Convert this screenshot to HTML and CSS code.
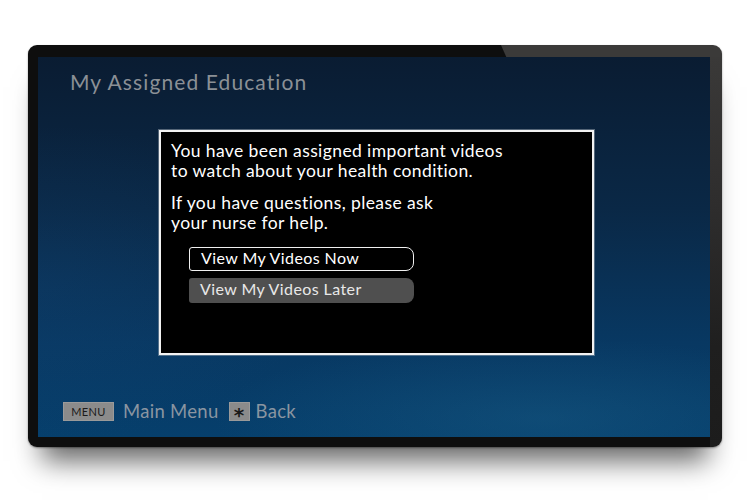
FILE: index.html
```html
<!DOCTYPE html>
<html lang="en">
<head>
<meta charset="utf-8">
<title>My Assigned Education</title>
<link rel="stylesheet" href="styles.css">
</head>
<body>
<div class="tv">
  <div class="screen">
    <h1 class="title">My Assigned Education</h1>
    <div class="dialog">
      <p class="msg">You have been assigned important videos<br>to watch about your health condition.</p>
      <p class="msg">If you have questions, please ask<br>your nurse for help.</p>
      <div class="options">
        <div class="option option-focus">View My Videos Now</div>
        <div class="option option-alt">View My Videos Later</div>
      </div>
    </div>
    <div class="footer">
      <span class="key key-menu">MENU</span>
      <span class="hint hint-menu">Main Menu</span>
      <span class="key key-star">*</span>
      <span class="hint">Back</span>
    </div>
  </div>
</div>
</body>
</html>
```
FILE: styles.css
```css
html, body {
  margin: 0;
  padding: 0;
  background: #ffffff;
}
body {
  width: 750px;
  height: 500px;
  overflow: hidden;
  font-family: Lato, "Noto Sans", "DejaVu Sans", sans-serif;
}
.tv {
  margin: 45px 0 0 28px;
  width: 694px;
  height: 402px;
  box-sizing: border-box;
  padding: 12px 12px 10px 10px;
  border-radius: 9px;
  background:
    linear-gradient(66deg, transparent 8px, #3b3a39 9px) no-repeat right top / 225px 12px,
    linear-gradient(#3b3a39, #2e2d2d 40%, #1f1f1f 75%, #1c1c1c) no-repeat right top / 12px 100%,
    #0e0e0e;
  box-shadow: 0 28px 26px -14px rgba(0, 0, 0, 0.6), 0 1px 2px rgba(0, 0, 0, 0.4);
}
.screen {
  width: 672px;
  height: 380px;
  display: flex;
  flex-direction: column;
  background:
    radial-gradient(ellipse 70% 30% at 75% 95%, rgba(30, 100, 140, 0.35), transparent 70%),
    radial-gradient(ellipse 60% 60% at 0% 60%, rgba(20, 70, 120, 0.25), transparent 70%),
    linear-gradient(to bottom, #0a1c32 0%, #0a2846 40%, #083862 75%, #063f6c 100%);
}
.title {
  margin: 12px 0 0 32px;
  font-size: 21px;
  line-height: 26px;
  font-weight: 400;
  letter-spacing: 1.1px;
  color: #8b9096;
}
.dialog {
  margin: 35px 0 0 121px;
  width: 435px;
  height: 225px;
  box-sizing: border-box;
  border: 2px solid #f2f2f2;
  box-shadow: 0 0 0 1px rgba(160, 170, 180, 0.5);
  background: #000000;
  padding: 8.5px 10px 0 10px;
  color: #ffffff;
}
.msg {
  margin: 0 0 12px 0;
  font-size: 17.5px;
  line-height: 20px;
  letter-spacing: 0.4px;
}
.options {
  margin: 14px 0 0 18px;
  display: flex;
  flex-direction: column;
  gap: 7px;
}
.option {
  width: 225px;
  height: 24px;
  box-sizing: border-box;
  padding-left: 11px;
  font-size: 16px;
  letter-spacing: 0.4px;
  border-radius: 3px 8px 8px 3px;
}
.option-focus {
  border: 1.5px solid #f0f0f0;
  color: #ffffff;
  line-height: 20px;
}
.option-alt {
  height: 25px;
  background: #4f4f4f;
  color: #e8e8e8;
  line-height: 22px;
}
.footer {
  margin: auto 0 15px 25px;
  display: flex;
  align-items: center;
}
.key {
  height: 19px;
  box-sizing: border-box;
  background: #8b8b8b;
  border: 1px solid #9a9a9a;
  color: #1a1a1a;
  display: flex;
  align-items: center;
  justify-content: center;
}
.key-menu {
  width: 51px;
  font-size: 11px;
  letter-spacing: 0.3px;
  margin-right: 9px;
}
.key-star {
  width: 21px;
  font-family: "DejaVu Sans", sans-serif;
  font-weight: 700;
  font-size: 20px;
  padding-top: 8px;
  margin-right: 6px;
}
.hint {
  font-size: 18.5px;
  color: #8a95a1;
  letter-spacing: 0.3px;
}
.hint-menu {
  margin-right: 10px;
}
```
